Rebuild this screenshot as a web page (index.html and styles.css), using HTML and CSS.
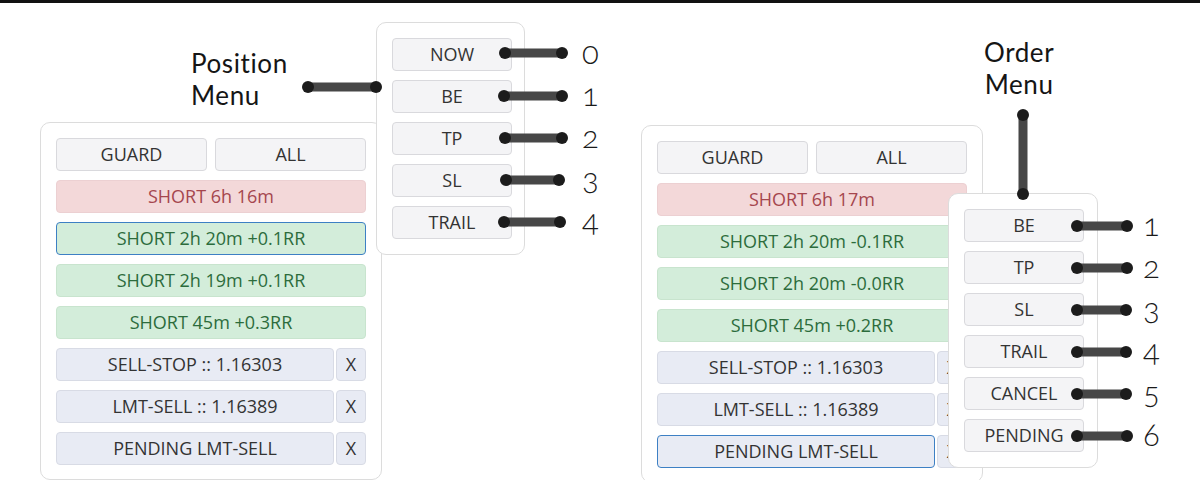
FILE: index.html
```html
<!DOCTYPE html>
<html lang="en">
<head>
    <meta charset="UTF-8">
    <title>Position and Order Menus</title>
    <link rel="stylesheet" href="styles.css">
</head>
<body>
    <div class="topbar"></div>

    <div class="stage">
        <section class="panel">
            <div class="pair">
                <button class="btn">GUARD</button>
                <button class="btn">ALL</button>
            </div>
            <button class="btn red">SHORT 6h 16m</button>
            <button class="btn green focus">SHORT 2h 20m +0.1RR</button>
            <button class="btn green">SHORT 2h 19m +0.1RR</button>
            <button class="btn green">SHORT 45m +0.3RR</button>
            <div class="order-row">
                <button class="btn order">SELL-STOP :: 1.16303</button>
                <button class="btn order close">X</button>
            </div>
            <div class="order-row">
                <button class="btn order">LMT-SELL :: 1.16389</button>
                <button class="btn order close">X</button>
            </div>
            <div class="order-row">
                <button class="btn order">PENDING LMT-SELL</button>
                <button class="btn order close">X</button>
            </div>
        </section>

        <section class="panel panel-right">
            <div class="pair">
                <button class="btn">GUARD</button>
                <button class="btn">ALL</button>
            </div>
            <button class="btn red">SHORT 6h 17m</button>
            <button class="btn green">SHORT 2h 20m -0.1RR</button>
            <button class="btn green">SHORT 2h 20m -0.0RR</button>
            <button class="btn green">SHORT 45m +0.2RR</button>
            <div class="order-row">
                <button class="btn order">SELL-STOP :: 1.16303</button>
                <button class="btn order close">X</button>
            </div>
            <div class="order-row">
                <button class="btn order">LMT-SELL :: 1.16389</button>
                <button class="btn order close">X</button>
            </div>
            <div class="order-row">
                <button class="btn order focus">PENDING LMT-SELL</button>
                <button class="btn order close">X</button>
            </div>
        </section>
    </div>

    <!-- popup menus -->
    <div class="menu menu-position">
        <button class="btn">NOW</button>
        <button class="btn">BE</button>
        <button class="btn">TP</button>
        <button class="btn">SL</button>
        <button class="btn">TRAIL</button>
    </div>

    <div class="menu menu-order">
        <button class="btn">BE</button>
        <button class="btn">TP</button>
        <button class="btn">SL</button>
        <button class="btn">TRAIL</button>
        <button class="btn">CANCEL</button>
        <button class="btn">PENDING</button>
    </div>

    <!-- annotations -->
    <div class="label label-position">Position<br>Menu</div>
    <div class="label label-order">Order<br>Menu</div>

    <div class="keys keys-position">
        <span>0</span><span>1</span><span>2</span><span>3</span><span>4</span>
    </div>
    <div class="keys keys-order">
        <span>1</span><span>2</span><span>3</span><span>4</span><span>5</span><span>6</span>
    </div>

    <svg class="wires" width="1200" height="480" viewBox="0 0 1200 480">
        <g class="wire">
            <line x1="308" y1="87" x2="376" y2="87"/>
            <line x1="505" y1="53" x2="562" y2="53"/>
            <line x1="504" y1="96" x2="562" y2="96"/>
            <line x1="505" y1="138" x2="562" y2="138"/>
            <line x1="506" y1="180" x2="559" y2="180"/>
            <line x1="504" y1="222" x2="560" y2="222"/>
            <line x1="1023" y1="115" x2="1023" y2="194"/>
            <line x1="1077" y1="226" x2="1127" y2="226"/>
            <line x1="1077" y1="268" x2="1127" y2="268"/>
            <line x1="1077" y1="310" x2="1126" y2="310"/>
            <line x1="1077" y1="352" x2="1126" y2="352"/>
            <line x1="1077" y1="394" x2="1126" y2="394"/>
            <line x1="1077" y1="436" x2="1127" y2="436"/>
        </g>
        <g class="dots">
            <circle cx="308" cy="87" r="6"/><circle cx="376" cy="87" r="6"/>
            <circle cx="505" cy="53" r="6"/><circle cx="562" cy="53" r="6"/>
            <circle cx="504" cy="96" r="6"/><circle cx="562" cy="96" r="6"/>
            <circle cx="505" cy="138" r="6"/><circle cx="562" cy="138" r="6"/>
            <circle cx="506" cy="180" r="6"/><circle cx="559" cy="180" r="6"/>
            <circle cx="504" cy="222" r="6"/><circle cx="560" cy="222" r="6"/>
            <circle cx="1023" cy="115" r="6"/><circle cx="1023" cy="194" r="6"/>
            <circle cx="1077" cy="226" r="6"/><circle cx="1127" cy="226" r="6"/>
            <circle cx="1077" cy="268" r="6"/><circle cx="1127" cy="268" r="6"/>
            <circle cx="1077" cy="310" r="6"/><circle cx="1126" cy="310" r="6"/>
            <circle cx="1077" cy="352" r="6"/><circle cx="1126" cy="352" r="6"/>
            <circle cx="1077" cy="394" r="6"/><circle cx="1126" cy="394" r="6"/>
            <circle cx="1077" cy="436" r="6"/><circle cx="1127" cy="436" r="6"/>
        </g>
    </svg>
</body>
</html>
```

FILE: styles.css
```css
* {
    box-sizing: border-box;
}
html, body {
    margin: 0;
    height: 480px;
    overflow: hidden;
}
body {
    position: relative;
    background: #fff;
    font-family: 'Open Sans', 'Noto Sans', sans-serif;
    color: #333;
}
.topbar {
    height: 3px;
    background: #111;
}
.stage {
    display: flex;
    align-items: flex-start;
    gap: 259px;
    padding: 119px 0 0 40px;
}
.panel {
    width: 342px;
    padding: 15px 15px 14px;
    border: 1px solid #dcdcdc;
    border-radius: 10px;
    background: #fff;
    display: flex;
    flex-direction: column;
    gap: 9px;
}
.panel-right {
    margin-top: 3px;
}
.pair {
    display: grid;
    grid-template-columns: 1fr 1fr;
    gap: 8px;
}
.order-row {
    display: flex;
    gap: 2px;
}
.btn {
    height: 33px;
    padding: 0;
    border: 1px solid #d9d9dd;
    border-radius: 4px;
    background: #f4f4f6;
    color: #333;
    font-family: inherit;
    font-size: 18px;
    line-height: 31px;
    text-align: center;
    cursor: pointer;
}
.btn.red {
    background: #f3d8d9;
    border-color: #ecd0d2;
    color: #a5464e;
}
.btn.green {
    background: #d3edda;
    border-color: #c8e4ce;
    color: #2c6c3c;
}
.btn.order {
    flex: 1;
    background: #e8ebf4;
    border-color: #d8dbe5;
}
.btn.close {
    flex: 0 0 30px;
}
.btn.focus {
    border-color: #3d80c4;
}

/* popup menus */
.menu {
    position: absolute;
    display: flex;
    flex-direction: column;
    gap: 9px;
    padding: 15px 14px 15px 15px;
    border: 1px solid #dcdcdc;
    border-radius: 10px;
    background: #fff;
}
.menu .btn {
    width: 120px;
}
.menu-position {
    left: 376px;
    top: 22px;
    width: 149px;
}
.menu-order {
    left: 948px;
    top: 193px;
    width: 150px;
}

/* annotations */
.label {
    position: absolute;
    font-family: Lato, 'Noto Sans', sans-serif;
    font-size: 26px;
    line-height: 31.5px;
    letter-spacing: 0.6px;
    color: #151515;
}
.label-position {
    left: 191px;
    top: 48px;
}
.label-order {
    left: 984px;
    top: 37px;
    text-align: center;
}
.keys {
    position: absolute;
    display: flex;
    flex-direction: column;
    font-family: Lato, 'Noto Sans', sans-serif;
    font-size: 31px;
    font-weight: 300;
    line-height: 42px;
    font-variant-numeric: oldstyle-nums;
    color: #1a1a1a;
}
.keys-position {
    left: 582px;
    top: 31px;
}
.keys-order {
    left: 1143px;
    top: 203px;
}
.wires {
    position: absolute;
    left: 0;
    top: 0;
    pointer-events: none;
}
.wire line {
    stroke: #474747;
    stroke-width: 9;
    stroke-linecap: round;
}
.dots circle {
    fill: #1c1c1c;
}
```
